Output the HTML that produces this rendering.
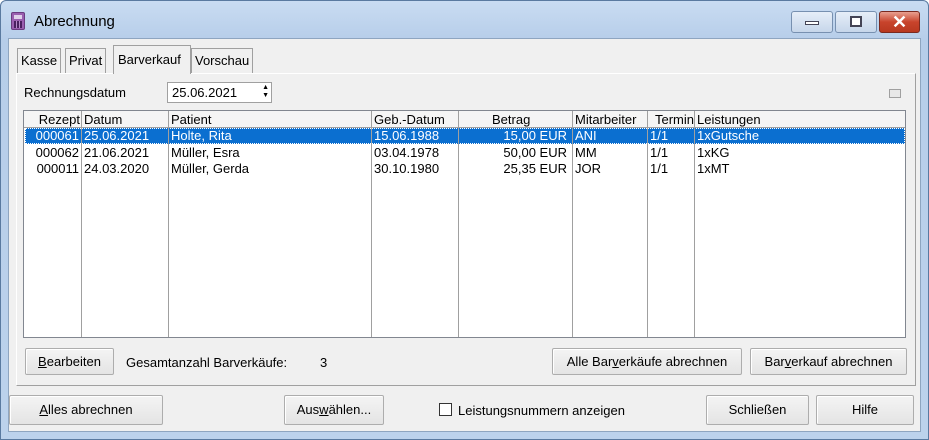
<!DOCTYPE html>
<html><head><style>
*{margin:0;padding:0;box-sizing:border-box}
body{width:929px;height:440px;background:#fff;font-family:"Liberation Sans",sans-serif;font-size:13px;color:#000;position:relative;overflow:hidden}
.frame{position:absolute;left:0;top:0;width:929px;height:440px;background:linear-gradient(#c9dcf2,#b6cde9 40px,#bcd2ec);border:1px solid #5a7aa0;border-radius:6px 6px 0 0}
.client{position:absolute;left:8px;top:38px;width:913px;height:394px;background:#f0f0f0;border:1px solid #8ea5c0}
.abs{position:absolute}
.btn{position:absolute;background:linear-gradient(#f4f4f4,#e4e4e4);border:1px solid #adadad;box-shadow:inset 1px 1px 0 #fff;text-align:center;font-size:13px;line-height:22px;border-radius:2px}
.tab{position:absolute;top:47px;height:26px;border:1px solid #a0a0a0;border-bottom:none;background:#f0f0f0;line-height:24px;padding:0 3px;font-size:13px}
.list{position:absolute;left:23px;top:110px;width:883px;height:228px;background:#fff;border:1px solid #828790}
.hdr{position:absolute;left:0;top:0;width:881px;height:17px;background:#f5f5f5;border-bottom:1px solid #a0a0a0}
.c{position:absolute;white-space:nowrap;line-height:16px}
.r{text-align:right}
.vl{position:absolute;top:0;width:1px;height:226px;background:#a0a0a0}
u{text-decoration:underline}
</style></head><body>
<div class="frame"></div>
<div class="abs" style="left:11px;top:12px;width:14px;height:18px;background:#9a5fb0;border:1px solid #6a3a80;border-radius:2px"><div style="margin:2px;height:4px;background:#e0d0ea"></div><div style="margin:1px 2px;height:7px;background:repeating-linear-gradient(90deg,#4a2060 0 2px,#b58ac8 2px 3px)"></div></div>
<div class="abs" style="left:34px;top:13px;font-size:15px">Abrechnung</div>
<div class="abs" style="left:791px;top:11px;width:42px;height:22px;border:1px solid #7790b0;border-radius:3px;background:linear-gradient(#e6eef8,#c6d6ea)"><div style="margin:9px 13px;height:4px;background:#fff;border:1px solid #445"></div></div>
<div class="abs" style="left:835px;top:11px;width:42px;height:22px;border:1px solid #7790b0;border-radius:3px;background:linear-gradient(#e6eef8,#c6d6ea)"><div style="margin:4px 14px;height:11px;border:2px solid #445;background:#fff"></div></div>
<div class="abs" style="left:879px;top:11px;width:41px;height:22px;border:1px solid #7a2a20;border-radius:3px;background:linear-gradient(#e8a090,#c8442c 50%,#b83820);color:#fff;font-weight:bold;font-size:18px;text-align:center;line-height:20px">✕</div>
<div class="client"></div>
<div class="abs" style="left:16px;top:73px;width:900px;height:313px;border:1px solid #a0a0a0;border-top-color:#fff;border-left-color:#fff;background:#f0f0f0"></div>
<div class="tab" style="left:17px;top:48px;height:25px">Kasse</div>
<div class="tab" style="left:65px;top:48px;height:25px">Privat</div>
<div class="tab" style="left:113px;top:45px;height:29px;border-bottom:none;z-index:2;line-height:28px;padding:0 4px 0 4px;width:78px">Barverkauf</div>
<div class="tab" style="left:191px;top:48px;height:25px">Vorschau</div>
<div class="abs" style="left:24px;top:85px;font-size:13px">Rechnungsdatum</div>
<div class="abs" style="left:167px;top:82px;width:105px;height:21px;background:#fff;border:1px solid #a0a0a0;padding:2px 4px;font-size:13px">25.06.2021<span style="position:absolute;right:2px;top:1px;font-size:7px;line-height:8px">▲<br>▼</span></div>
<div class="abs" style="left:889px;top:89px;width:12px;height:9px;border:1px solid #a0a0a0;background:#e8e8e8"></div>
<div class="list">
<div class="hdr"></div>
<div class="abs" style="left:1px;top:17px;width:880px;height:16px;background:#0b6fd0;border:1px dotted #fff"></div>
<div class="vl" style="left:57px"></div><div class="vl" style="left:144px"></div><div class="vl" style="left:347px"></div><div class="vl" style="left:434px"></div><div class="vl" style="left:548px"></div><div class="vl" style="left:623px"></div><div class="vl" style="left:670px"></div>
<div class="c r" style="left:0;width:56px;top:1px">Rezept</div><div class="c" style="left:60px;top:1px">Datum</div><div class="c" style="left:147px;top:1px">Patient</div><div class="c" style="left:350px;top:1px">Geb.-Datum</div><div class="c" style="left:468px;top:1px">Betrag</div><div class="c" style="left:551px;top:1px">Mitarbeiter</div><div class="c r" style="left:600px;width:70px;top:1px">Termin</div><div class="c" style="left:673px;top:1px">Leistungen</div>
<div style="color:#fff"><div class="c r" style="left:0;width:55px;top:17px">000061</div><div class="c" style="left:60px;top:17px">25.06.2021</div><div class="c" style="left:147px;top:17px">Holte, Rita</div><div class="c" style="left:350px;top:17px">15.06.1988</div><div class="c r" style="left:440px;width:103px;top:17px">15,00 EUR</div><div class="c" style="left:551px;top:17px">ANI</div><div class="c" style="left:626px;top:17px">1/1</div><div class="c" style="left:673px;top:17px">1xGutsche</div></div>
<div class="c r" style="left:0;width:55px;top:34px">000062</div><div class="c" style="left:60px;top:34px">21.06.2021</div><div class="c" style="left:147px;top:34px">Müller, Esra</div><div class="c" style="left:350px;top:34px">03.04.1978</div><div class="c r" style="left:440px;width:103px;top:34px">50,00 EUR</div><div class="c" style="left:551px;top:34px">MM</div><div class="c" style="left:626px;top:34px">1/1</div><div class="c" style="left:673px;top:34px">1xKG</div>
<div class="c r" style="left:0;width:55px;top:50px">000011</div><div class="c" style="left:60px;top:50px">24.03.2020</div><div class="c" style="left:147px;top:50px">Müller, Gerda</div><div class="c" style="left:350px;top:50px">30.10.1980</div><div class="c r" style="left:440px;width:103px;top:50px">25,35 EUR</div><div class="c" style="left:551px;top:50px">JOR</div><div class="c" style="left:626px;top:50px">1/1</div><div class="c" style="left:673px;top:50px">1xMT</div>
</div>
<div class="btn" style="left:25px;top:348px;width:89px;height:27px;line-height:25px"><u>B</u>earbeiten</div>
<div class="abs" style="left:126px;top:355px">Gesamtanzahl Barverkäufe:</div>
<div class="abs" style="left:320px;top:355px">3</div>
<div class="btn" style="left:552px;top:348px;width:190px;height:27px;line-height:25px">Alle Bar<u>v</u>erkäufe abrechnen</div>
<div class="btn" style="left:750px;top:348px;width:157px;height:27px;line-height:25px">Bar<u>v</u>erkauf abrechnen</div>
<div class="btn" style="left:9px;top:395px;width:154px;height:30px;line-height:28px"><u>A</u>lles abrechnen</div>
<div class="btn" style="left:284px;top:395px;width:100px;height:30px;line-height:28px">Aus<u>w</u>ählen...</div>
<div class="abs" style="left:439px;top:403px;width:13px;height:13px;background:#fff;border:1px solid #333"></div>
<div class="abs" style="left:458px;top:403px;font-size:13px">Leistungsnummern anzeigen</div>
<div class="btn" style="left:706px;top:395px;width:103px;height:30px;line-height:28px">Schließen</div>
<div class="btn" style="left:816px;top:395px;width:98px;height:30px;line-height:28px">Hilfe</div>
</body></html>
